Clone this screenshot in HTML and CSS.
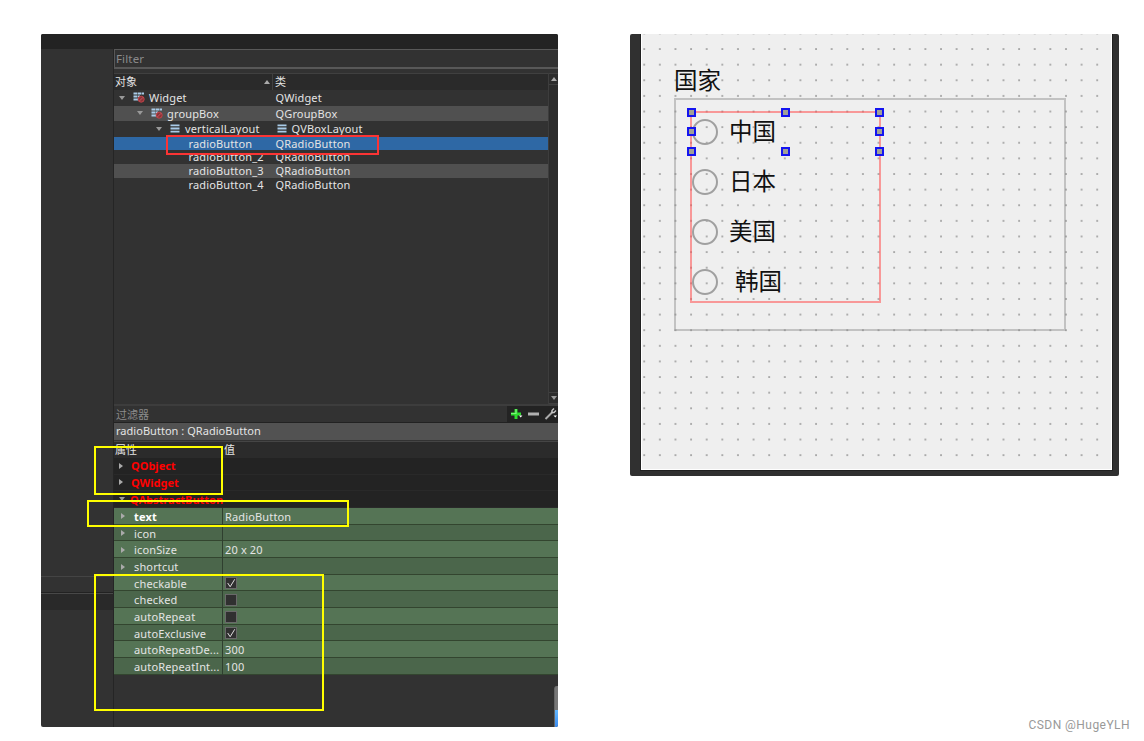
FILE: index.html
```
<!DOCTYPE html>
<html lang="zh-CN">
<head>
<meta charset="UTF-8">
<meta name="viewport" content="width=device-width, initial-scale=1.0">
<title>QRadioButton</title>
<link rel="stylesheet" href="styles.css">
</head>
<body>
  <svg class="defs" width="0" height="0">
    <symbol id="icon-broken" viewBox="0 0 12 11">
      <path d="M0.5 1.5h4M5 1.5h3M8.5 1.5H11M0.5 4.5h4M5 4.5h2M0.5 7.5h4.500" stroke="#a9cbe8" stroke-width="1.8" fill="none"/>
      <circle cx="8.200" cy="7.200" r="3" fill="#8c3438" stroke="#c0444a" stroke-width="1"/>
      <path d="M6.200 9.200l4-4" stroke="#d0606a" stroke-width="0.8"/>
    </symbol>
    <symbol id="icon-vbox" viewBox="0 0 10 10">
      <path d="M0 1.5h10M0 5h10M0 8.5h10" stroke="#a9cbe8" stroke-width="2"/>
    </symbol>
  </svg>

  <div class="page">
    <div class="designer">
      <div class="topbar"></div>
      <div class="columns">
        <div class="gutter">
          <div class="gutter-line"></div>
          <div class="gutter-bar"></div>
        </div>
        <div class="main">
          <div class="filter">Filter</div>
          <div class="tree">
            <div class="tree-body">
              <div class="tree-head">
                <div class="head-name">对象<i class="tri up"></i></div>
                <div class="head-class">类</div>
              </div>
              <div class="node lv0">
                <div class="name"><i class="tri down"></i><svg class="broken"><use href="#icon-broken"/></svg><span>Widget</span></div>
                <div class="cls">QWidget</div>
              </div>
              <div class="node lv1 alt">
                <div class="name"><i class="tri down"></i><svg class="broken"><use href="#icon-broken"/></svg><span>groupBox</span></div>
                <div class="cls">QGroupBox</div>
              </div>
              <div class="node lv2">
                <div class="name"><i class="tri down"></i><svg class="vbox"><use href="#icon-vbox"/></svg><span>verticalLayout</span></div>
                <div class="cls"><svg class="vbox"><use href="#icon-vbox"/></svg>QVBoxLayout</div>
              </div>
              <div class="node leaf selected">
                <div class="name">radioButton</div>
                <div class="cls">QRadioButton</div>
              </div>
              <div class="node leaf">
                <div class="name">radioButton_2</div>
                <div class="cls">QRadioButton</div>
              </div>
              <div class="node leaf alt">
                <div class="name">radioButton_3</div>
                <div class="cls">QRadioButton</div>
              </div>
              <div class="node leaf">
                <div class="name">radioButton_4</div>
                <div class="cls">QRadioButton</div>
              </div>
            </div>
            <div class="scroll">
              <div class="scroll-btn"><i class="tri up"></i></div>
              <div class="scroll-btn"><i class="tri down"></i></div>
            </div>
          </div>

          <div class="prop-filter">
            <span>过滤器</span>
            <div class="tools">
              <svg width="51" height="16" viewBox="0 0 51 16">
                <path d="M9 3v10M4 8h10" stroke="#2fdc2f" stroke-width="3"/>
                <path d="M9 3v5M4 7.5h5" stroke="#7df07d" stroke-width="1.2"/>
                <path d="M12 9.5h3.4l-1.7 2z" fill="#fff"/>
                <path d="M21 8h11" stroke="#b0b0b0" stroke-width="3"/>
                <path d="M38.500 13l7-7" stroke="#aaa" stroke-width="2"/>
                <path d="M47 2.500l-2 2v2h2l2-2" stroke="#c8c8c8" stroke-width="1.4" fill="none"/>
                <path d="M46.500 9.500H50l-1.700 2z" fill="#fff"/>
              </svg>
            </div>
          </div>
          <div class="object-bar">radioButton : QRadioButton</div>
          <div class="prop-head"><div>属性</div><div>值</div></div>
          <div class="section"><i class="tri right"></i>QObject</div>
          <div class="section"><i class="tri right"></i>QWidget</div>
          <div class="section"><i class="tri down"></i>QAbstractButton</div>
          <div class="props">
            <div class="prop"><div class="key bold"><i class="tri right"></i>text</div><div class="val">RadioButton</div></div>
            <div class="prop"><div class="key"><i class="tri right"></i>icon</div><div class="val"></div></div>
            <div class="prop"><div class="key"><i class="tri right"></i>iconSize</div><div class="val">20 x 20</div></div>
            <div class="prop"><div class="key"><i class="tri right"></i>shortcut</div><div class="val"></div></div>
            <div class="prop"><div class="key">checkable</div><div class="val"><svg class="check" viewBox="0 0 12 12"><path d="M2 6l3 4.500L10.500 1.500"/></svg></div></div>
            <div class="prop"><div class="key">checked</div><div class="val"><svg class="check" viewBox="0 0 12 12"></svg></div></div>
            <div class="prop"><div class="key">autoRepeat</div><div class="val"><svg class="check" viewBox="0 0 12 12"></svg></div></div>
            <div class="prop"><div class="key">autoExclusive</div><div class="val"><svg class="check" viewBox="0 0 12 12"><path d="M2 6l3 4.500L10.500 1.500"/></svg></div></div>
            <div class="prop"><div class="key">autoRepeatDe...</div><div class="val">300</div></div>
            <div class="prop"><div class="key">autoRepeatInt...</div><div class="val">100</div></div>
          </div>
        </div>
      </div>
      <div class="side-thumb"></div>
      <div class="mark mark-red"></div>
      <div class="mark mark-object"></div>
      <div class="mark mark-text"></div>
      <div class="mark mark-check"></div>
    </div>

    <div class="preview">
      <div class="form">
        <svg class="dots" width="470" height="435">
          <pattern id="grid" x="-5.610" y="7.200" width="15.620" height="15.620" patternUnits="userSpaceOnUse">
            <rect x="7" y="7" width="1.700" height="1.700" fill="#999"/>
          </pattern>
          <rect width="463" height="435" fill="url(#grid)"/>
        </svg>
        <div class="group-title">国家</div>
        <div class="group-box">
          <div class="vlayout">
            <div class="radio"><i></i><span>中国</span></div>
            <div class="radio"><i></i><span>日本</span></div>
            <div class="radio"><i></i><span>美国</span></div>
            <div class="radio indent"><i></i><span>韩国</span></div>
            <b class="handle l t"></b><b class="handle c t"></b><b class="handle r t"></b>
            <b class="handle l m"></b><b class="handle r m"></b>
            <b class="handle l b"></b><b class="handle c b"></b><b class="handle r b"></b>
          </div>
        </div>
      </div>
    </div>
  </div>
  <div class="watermark">CSDN @HugeYLH</div>
</body>
</html>
```
FILE: styles.css
```
* {
  box-sizing: border-box;
}
body {
  margin: 0;
  width: 1144px;
  height: 741px;
  overflow: hidden;
  background: #fff;
  font-family: "Noto Sans", "Noto Sans CJK SC", sans-serif;
  font-size: 11px;
  color: #e4e4e4;
}
.defs {
  display: block;
}
.page {
  display: flex;
  gap: 72px;
  align-items: flex-start;
  padding: 34px 0 0 41px;
  height: 727px;
}
.designer {
  position: relative;
  width: 517px;
  height: 693px;
  background: #323232;
  border-radius: 2px;
  overflow: hidden;
  letter-spacing: 0.15px;
  white-space: nowrap;
}
.topbar {
  height: 15px;
  background: #232323;
}
.columns {
  display: flex;
  height: 678px;
}
.gutter {
  width: 73px;
  padding-top: 527px;
  border-right: 1px solid #252525;
}
.gutter-line {
  height: 17px;
  border-top: 1px solid #444;
  border-bottom: 1px solid #222;
}
.gutter-bar {
  height: 17px;
  border-top: 1px solid #484848;
  background: #292929;
}
.main {
  flex: 1;
  min-width: 0;
}

/* 三角箭头 */
.tri {
  flex: none;
  width: 0;
  height: 0;
  border: 3.500px solid transparent;
}
.tri.up {
  border-top: 0;
  border-bottom: 4px solid #aaa;
}
.tri.down {
  border-bottom: 0;
  border-top: 4px solid #999;
}
.tri.right {
  border-right: 0;
  border-left: 4px solid #aaa;
}

/* 对象树 */
.filter {
  height: 20px;
  padding-left: 1px;
  border: 1px solid #585858;
  border-right: 0;
  border-bottom-width: 2px;
  line-height: 18px;
  font-size: 11.5px;
  color: #8b8b8b;
}
.tree {
  display: flex;
  height: 337px;
  padding-top: 4px;
  border-bottom: 2px solid #3d3d3d;
}
.tree-body {
  width: 434px;
}
.tree-head {
  display: flex;
  height: 17px;
  background: #2a2a2a;
  border-top: 1px solid #404040;
  line-height: 16px;
  letter-spacing: 0;
}
.head-name {
  display: flex;
  align-items: center;
  justify-content: space-between;
  width: 159px;
  padding: 0 2px 0 1px;
  border-right: 1px solid #404040;
}
.head-class {
  padding-left: 2px;
}
.node {
  display: flex;
  height: 15.500px;
  line-height: 15px;
}
.name {
  display: flex;
  align-items: center;
  width: 161.500px;
}
.cls {
  display: flex;
  align-items: center;
}
.cls .vbox {
  margin-left: 1px;
}
.name .tri {
  margin-right: 8px;
}
.lv0 .name {
  padding-left: 5px;
}
.lv1 .name {
  padding-left: 23px;
}
.lv2 .name {
  padding-left: 42px;
}
.leaf {
  height: 13.800px;
  line-height: 13px;
}
.leaf .name,
.leaf .cls {
  align-items: flex-start;
}
.leaf .name {
  padding-left: 74.500px;
}
.alt {
  background: #505050;
}
.selected {
  background: #2e68a5;
}
.broken {
  width: 12px;
  height: 11px;
  margin-right: 4px;
}
.vbox {
  width: 10px;
  height: 9px;
  margin-right: 5px;
}
.scroll {
  display: flex;
  flex-direction: column;
  justify-content: space-between;
  width: 10px;
  background: #2c2c2c;
  border-left: 1px solid #3d3d3d;
}
.scroll-btn {
  display: flex;
  align-items: center;
  justify-content: center;
  height: 12px;
  border: solid #404040;
  border-width: 1px 0;
}

/* 属性编辑器 */
.prop-filter {
  display: flex;
  justify-content: space-between;
  height: 17px;
  padding-left: 2px;
  border-bottom: 1px solid #222;
  line-height: 17px;
  color: #8b8b8b;
  letter-spacing: 0;
}
.tools {
  width: 51px;
  background: #232323;
}
.tools svg {
  display: block;
}
.object-bar {
  height: 17px;
  padding-left: 2px;
  background: #525252;
  line-height: 16px;
  letter-spacing: 0.030px;
}
.prop-head {
  display: grid;
  grid-template-columns: 109px 1fr;
  height: 17px;
  margin-top: 1px;
  border-top: 1px solid #454545;
  background: #2b2b2b;
  line-height: 16px;
  letter-spacing: 0;
}
.prop-head div {
  padding-left: 1px;
}
.section {
  display: flex;
  align-items: center;
  height: 16.670px;
  padding-left: 5px;
  background: #232323;
  border-bottom: 1px solid #292929;
  font-weight: bold;
  color: #f00;
  letter-spacing: 0;
}
.section .tri {
  margin-right: 8px;
}
.section .tri.down {
  margin-right: 5px;
}
.prop {
  display: grid;
  grid-template-columns: 109px 1fr;
  height: 16.700px;
  background: #557455;
  border-bottom: 1px solid #33452f;
  line-height: 17px;
}
.prop:nth-child(even) {
  background: #4b664b;
}
.key {
  display: flex;
  align-items: center;
  padding-left: 20px;
  border-right: 1px solid #2f3f2f;
}
.key .tri {
  margin-left: -13px;
  margin-right: 9px;
}
.bold {
  font-weight: bold;
  color: #fff;
}
.val {
  display: flex;
  align-items: center;
  padding-left: 2px;
}
.check {
  width: 12px;
  height: 12px;
  background: #303030;
  border: 1px solid #696969;
}
.check path {
  fill: none;
  stroke: #ddd;
  stroke-width: 1.2;
}
.side-thumb {
  position: absolute;
  right: 0;
  bottom: 0;
  width: 4px;
  height: 41px;
  border-left: 1px solid #666;
  border-radius: 3px 0 0 0;
  background: linear-gradient(#777 24px, #63b8ff 24px, #3c8cf0);
}

/* 标注框 */
.mark {
  position: absolute;
  border: 2px solid #ff0;
}
.mark-red {
  left: 125px;
  top: 101px;
  width: 213px;
  height: 20px;
  border-color: #fb3434;
}
.mark-object {
  left: 53px;
  top: 412px;
  width: 129px;
  height: 49px;
}
.mark-text {
  left: 46px;
  top: 466px;
  width: 262px;
  height: 27px;
}
.mark-check {
  left: 53px;
  top: 540px;
  width: 230px;
  height: 137px;
}

/* 窗体预览 */
.preview {
  width: 489px;
  height: 442px;
  padding: 0 7px 6px 11px;
  background: #303030;
  border-radius: 2px;
}
.form {
  position: relative;
  height: 436px;
  padding: 32px 0 0 32px;
  background: #efefef;
  border: solid #fff;
  border-width: 0 1px 1px;
  box-shadow: 0 0 0 1px #202020;
  clip-path: inset(0 -1px -1px -1px);
  color: #111;
  font-family: "Noto Sans CJK SC", sans-serif;
  font-size: 23.500px;
}
.dots {
  position: absolute;
  left: 0;
  top: 0;
}
.group-title {
  position: relative;
  height: 32px;
  line-height: 27px;
}
.group-box {
  position: relative;
  width: 392px;
  height: 233px;
  padding: 11px 0 0 14px;
  border: 2px solid rgba(140, 140, 140, 0.45);
}
.vlayout {
  position: relative;
  width: 191px;
  height: 192px;
  border: 2px solid rgba(255, 80, 80, 0.55);
}
.radio {
  display: flex;
  align-items: center;
  gap: 11px;
  height: 50px;
  line-height: 47px;
}
.radio span {
  height: 50px;
}
.radio:first-child {
  margin-top: -6px;
}
.radio.indent {
  gap: 17px;
}
.radio i {
  width: 26px;
  height: 26px;
  border: 2px solid #a0a0a0;
  border-radius: 50%;
}
.handle {
  position: absolute;
  width: 9px;
  height: 9px;
  background: #a0a098;
  border: 2px solid #1414f0;
}
.l { left: -5px; }
.c { left: 89px; }
.r { left: 183px; }
.t { top: -5px; }
.m { top: 14px; }
.b { top: 34px; }
.watermark {
  position: absolute;
  right: 14px;
  bottom: 8px;
  font-family: Roboto, sans-serif;
  font-size: 12px;
  line-height: 16px;
  letter-spacing: 0.450px;
  color: #999;
}
```
